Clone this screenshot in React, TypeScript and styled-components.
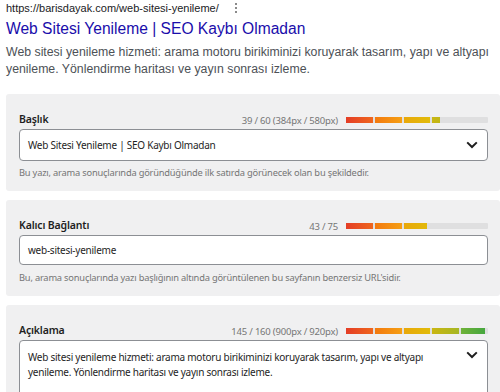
import React from 'react';
import styled, { createGlobalStyle } from 'styled-components';

const GlobalStyle = createGlobalStyle`
  html, body {
    margin: 0;
    padding: 0;
    background: #ffffff;
  }
  * {
    box-sizing: border-box;
  }
`;

const Page = styled.div`
  width: 500px;
  padding: 1px 0 0 6px;
  font-family: 'Noto Sans', 'Open Sans', sans-serif;
`;

const Preview = styled.div`
  font-family: Arial, 'Liberation Sans', sans-serif;
`;

const UrlRow = styled.div`
  display: flex;
  align-items: center;
  gap: 16px;
  height: 14px;
  font-size: 11px;
  color: #202124;
`;

const Dots = styled.span`
  display: flex;
  flex-direction: column;
  gap: 2px;
  span {
    width: 2px;
    height: 2px;
    background: #8a8a8a;
  }
`;

const SerpTitle = styled.div`
  margin-top: 4px;
  font-size: 15.6px;
  line-height: 20px;
  color: #1a0dab;
  white-space: nowrap;
`;

const SerpDesc = styled.div`
  margin-top: 5px;
  font-size: 12.3px;
  line-height: 17px;
  color: #4d5156;
  white-space: nowrap;
`;

const Panel = styled.section<{ $top: number }>`
  margin-top: ${(p) => p.$top}px;
  background: #f0f0f1;
  border-radius: 3px;
  padding: 19px 12px 12px 13px;
`;

const FieldHead = styled.div`
  display: flex;
  align-items: center;
  height: 14px;
  margin-bottom: 2px;
`;

const Label = styled.label`
  flex: 1;
  font-size: 10.5px;
  font-weight: 600;
  letter-spacing: -0.15px;
  color: #1e1e1e;
  margin-top: -3px;
`;

const Counter = styled.span`
  font-size: 9.5px;
  letter-spacing: -0.2px;
  color: #757575;
  margin-right: 8px;
`;

const Bar = styled.div`
  width: 142px;
  height: 6px;
  background: #dfdfe0;
  border-radius: 1px;
`;

const Fill = styled.div`
  display: flex;
  gap: 2px;
  height: 100%;
  overflow: hidden;
`;

const Segment = styled.span<{ $from: string; $to: string }>`
  flex: 0 0 26.8px;
  height: 100%;
  background: linear-gradient(90deg, ${(p) => p.$from}, ${(p) => p.$to});
`;

const InputBox = styled.div<{ $h: number }>`
  display: flex;
  align-items: center;
  height: ${(p) => p.$h}px;
  padding: 0 9px 0 8px;
  background: #ffffff;
  border: 1px solid #8c8f94;
  border-radius: 4px;
  font-size: 10px;
  letter-spacing: -0.25px;
  color: #1e1e1e;
`;

const AreaBox = styled.div`
  display: flex;
  align-items: flex-start;
  padding: 9px 9px 10px 8px;
  min-height: 60px;
  background: #ffffff;
  border: 1px solid #8c8f94;
  border-radius: 4px;
  font-size: 10px;
  letter-spacing: -0.25px;
  line-height: 15px;
  color: #1e1e1e;
`;

const Value = styled.span`
  flex: 1;
  white-space: nowrap;
`;

const Help = styled.div<{ $top: number }>`
  margin-top: ${(p) => p.$top}px;
  font-size: 9.3px;
  letter-spacing: -0.2px;
  line-height: 12px;
  color: #757575;
`;

const segs: [string, string][] = [
  ['#e43d26', '#ef661d'],
  ['#f3790f', '#f59f14'],
  ['#e9a80a', '#e1bb0a'],
  ['#cab612', '#a6b724'],
  ['#6fb238', '#41a640'],
];

const Meter = ({ ratio }: { ratio: number }) => (
  <Bar>
    <Fill style={{ width: `${Math.round(142 * ratio)}px` }}>
      {segs.map(([a, b], i) => (
        <Segment key={i} $from={a} $to={b} />
      ))}
    </Fill>
  </Bar>
);

const Chevron = ({ top = 0 }: { top?: number }) => (
  <svg width="12" height="8" viewBox="0 0 12 8" style={{ marginTop: top }}>
    <path d="M1.2 1.4 L6 6 L10.8 1.4" fill="none" stroke="#1e1e1e" strokeWidth="2" />
  </svg>
);

const App = () => (
  <>
    <GlobalStyle />
    <Page>
      <Preview>
        <UrlRow>
          https://barisdayak.com/web-sitesi-yenileme/
          <Dots>
            <span />
            <span />
            <span />
          </Dots>
        </UrlRow>
        <SerpTitle>Web Sitesi Yenileme | SEO Kaybı Olmadan</SerpTitle>
        <SerpDesc>
          Web sitesi yenileme hizmeti: arama motoru birikiminizi koruyarak tasarım, yapı ve altyapı
          <br />
          yenileme. Yönlendirme haritası ve yayın sonrası izleme.
        </SerpDesc>
      </Preview>

      <Panel $top={16}>
        <FieldHead>
          <Label>Başlık</Label>
          <Counter>39 / 60 (384px / 580px)</Counter>
          <Meter ratio={384 / 580} />
        </FieldHead>
        <InputBox $h={32}>
          <Value>Web Sitesi Yenileme | SEO Kaybı Olmadan</Value>
          <Chevron />
        </InputBox>
        <Help $top={6}>Bu yazı, arama sonuçlarında göründüğünde ilk satırda görünecek olan bu şekildedir.</Help>
      </Panel>

      <Panel $top={9}>
        <FieldHead>
          <Label>Kalıcı Bağlantı</Label>
          <Counter>43 / 75</Counter>
          <Meter ratio={43 / 75} />
        </FieldHead>
        <InputBox $h={30}>
          <Value>web-sitesi-yenileme</Value>
        </InputBox>
        <Help $top={7}>Bu, arama sonuçlarında yazı başlığının altında görüntülenen bu sayfanın benzersiz URL'sidir.</Help>
      </Panel>

      <Panel $top={9}>
        <FieldHead>
          <Label>Açıklama</Label>
          <Counter>145 / 160 (900px / 920px)</Counter>
          <Meter ratio={900 / 920} />
        </FieldHead>
        <AreaBox>
          <Value>
            Web sitesi yenileme hizmeti: arama motoru birikiminizi koruyarak tasarım, yapı ve altyapı
            <br />
            yenileme. Yönlendirme haritası ve yayın sonrası izleme.
          </Value>
          <Chevron top={1} />
        </AreaBox>
      </Panel>
    </Page>
  </>
);

export default App;
